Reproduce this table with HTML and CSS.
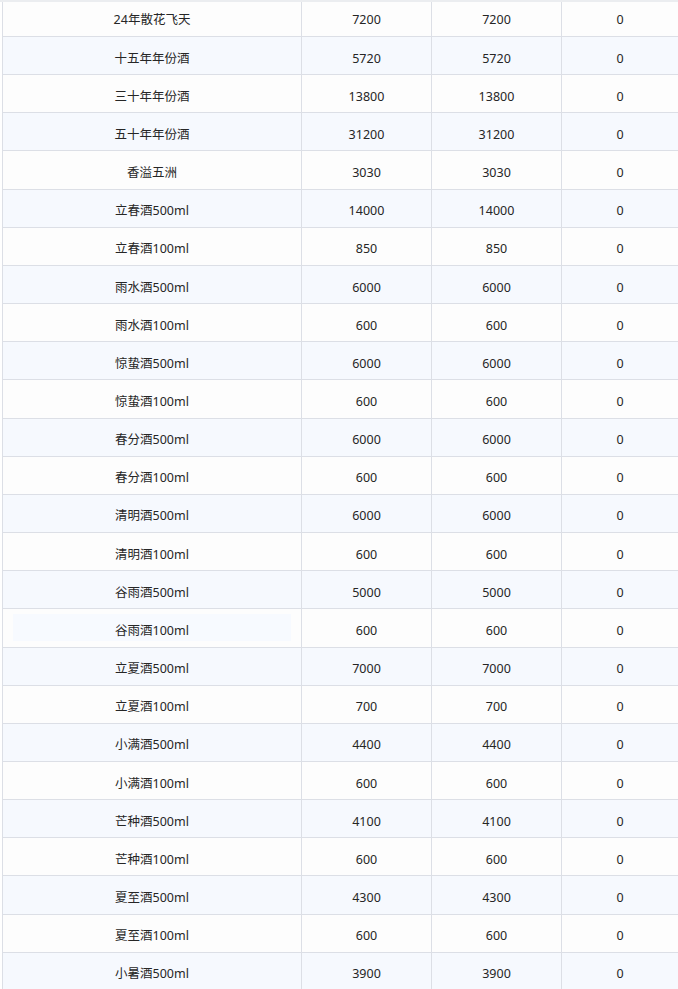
FILE: index.html
```html
<!DOCTYPE html>
<html lang="zh-CN">
<head>
<meta charset="utf-8">
<title>库存表</title>
<link rel="stylesheet" href="styles.css">
</head>
<body>
<div class="viewport">
  <div class="topline"></div>
  <div class="table">
    <div class="row"><div class="cell">24年散花飞天</div><div class="cell">7200</div><div class="cell">7200</div><div class="cell">0</div></div>
    <div class="row"><div class="cell">十五年年份酒</div><div class="cell">5720</div><div class="cell">5720</div><div class="cell">0</div></div>
    <div class="row"><div class="cell">三十年年份酒</div><div class="cell">13800</div><div class="cell">13800</div><div class="cell">0</div></div>
    <div class="row"><div class="cell">五十年年份酒</div><div class="cell">31200</div><div class="cell">31200</div><div class="cell">0</div></div>
    <div class="row"><div class="cell">香溢五洲</div><div class="cell">3030</div><div class="cell">3030</div><div class="cell">0</div></div>
    <div class="row"><div class="cell">立春酒500ml</div><div class="cell">14000</div><div class="cell">14000</div><div class="cell">0</div></div>
    <div class="row"><div class="cell">立春酒100ml</div><div class="cell">850</div><div class="cell">850</div><div class="cell">0</div></div>
    <div class="row"><div class="cell">雨水酒500ml</div><div class="cell">6000</div><div class="cell">6000</div><div class="cell">0</div></div>
    <div class="row"><div class="cell">雨水酒100ml</div><div class="cell">600</div><div class="cell">600</div><div class="cell">0</div></div>
    <div class="row"><div class="cell">惊蛰酒500ml</div><div class="cell">6000</div><div class="cell">6000</div><div class="cell">0</div></div>
    <div class="row"><div class="cell">惊蛰酒100ml</div><div class="cell">600</div><div class="cell">600</div><div class="cell">0</div></div>
    <div class="row"><div class="cell">春分酒500ml</div><div class="cell">6000</div><div class="cell">6000</div><div class="cell">0</div></div>
    <div class="row"><div class="cell">春分酒100ml</div><div class="cell">600</div><div class="cell">600</div><div class="cell">0</div></div>
    <div class="row"><div class="cell">清明酒500ml</div><div class="cell">6000</div><div class="cell">6000</div><div class="cell">0</div></div>
    <div class="row"><div class="cell">清明酒100ml</div><div class="cell">600</div><div class="cell">600</div><div class="cell">0</div></div>
    <div class="row"><div class="cell">谷雨酒500ml</div><div class="cell">5000</div><div class="cell">5000</div><div class="cell">0</div></div>
    <div class="row"><div class="cell"><span class="hl">谷雨酒100ml</span></div><div class="cell">600</div><div class="cell">600</div><div class="cell">0</div></div>
    <div class="row"><div class="cell">立夏酒500ml</div><div class="cell">7000</div><div class="cell">7000</div><div class="cell">0</div></div>
    <div class="row"><div class="cell">立夏酒100ml</div><div class="cell">700</div><div class="cell">700</div><div class="cell">0</div></div>
    <div class="row"><div class="cell">小满酒500ml</div><div class="cell">4400</div><div class="cell">4400</div><div class="cell">0</div></div>
    <div class="row"><div class="cell">小满酒100ml</div><div class="cell">600</div><div class="cell">600</div><div class="cell">0</div></div>
    <div class="row"><div class="cell">芒种酒500ml</div><div class="cell">4100</div><div class="cell">4100</div><div class="cell">0</div></div>
    <div class="row"><div class="cell">芒种酒100ml</div><div class="cell">600</div><div class="cell">600</div><div class="cell">0</div></div>
    <div class="row"><div class="cell">夏至酒500ml</div><div class="cell">4300</div><div class="cell">4300</div><div class="cell">0</div></div>
    <div class="row"><div class="cell">夏至酒100ml</div><div class="cell">600</div><div class="cell">600</div><div class="cell">0</div></div>
    <div class="row"><div class="cell">小暑酒500ml</div><div class="cell">3900</div><div class="cell">3900</div><div class="cell">0</div></div>
  </div>
</div>
</body>
</html>
```
FILE: styles.css
```css
html, body {
  margin: 0;
  padding: 0;
  background: #ffffff;
}
.viewport {
  width: 678px;
  height: 989px;
  overflow: hidden;
  position: relative;
  background: #ffffff;
}
.topline {
  position: absolute;
  left: 0;
  top: 0;
  width: 100%;
  height: 2px;
  background: #ebedf0;
  z-index: 2;
}
.table {
  margin-left: 2px;
  margin-top: -1.1667px;
  border-left: 1px solid #dcdfe6;
  font-family: "Noto Sans", "Noto Sans CJK SC", sans-serif;
  font-size: 12.5px;
  color: #262626;
}
.row {
  display: grid;
  grid-template-columns: 299px 130px 130px 1fr;
  height: 38.1667px;
  box-sizing: border-box;
  border-bottom: 1px solid #dcdfe6;
  background: #fdfdfd;
}
.row:nth-child(even) {
  background: #f6f9fe;
}
.cell {
  border-right: 1px solid #dcdfe6;
  display: flex;
  align-items: center;
  justify-content: center;
  padding: 11px 10px 5px;
  line-height: 16px;
}
.cell:last-child {
  border-right: none;
}
.hl {
  flex: 1;
  align-self: stretch;
  display: flex;
  align-items: center;
  justify-content: center;
  margin: -6px 0 1px;
  padding-top: 7px;
  background: #f7faff;
}
```
